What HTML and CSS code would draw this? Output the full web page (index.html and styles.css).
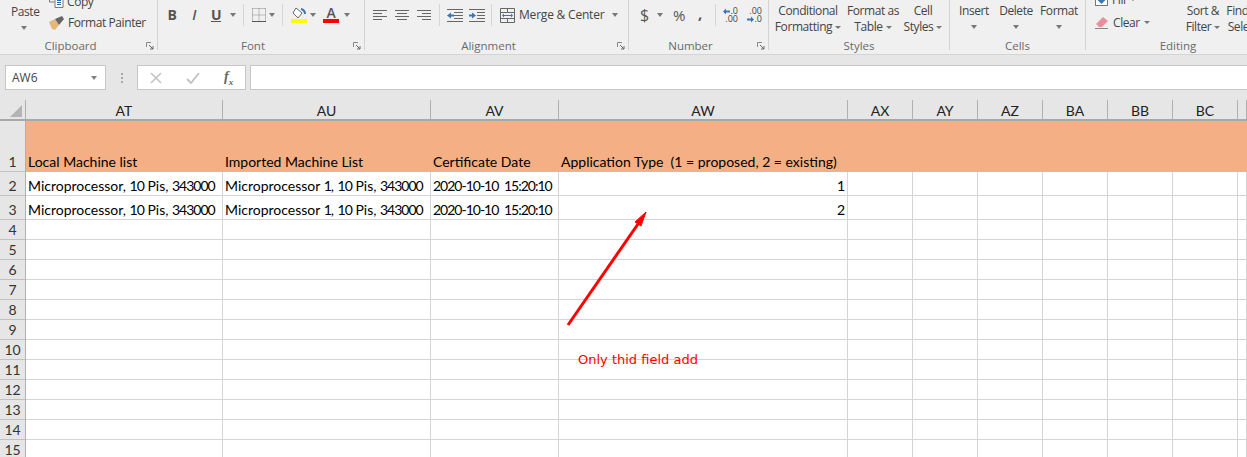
FILE: index.html
```html
<!DOCTYPE html>
<html lang="en">
<head>
<meta charset="utf-8">
<title>Spreadsheet</title>
<link rel="stylesheet" href="styles.css">
</head>
<body>
<div class="app">
  <div class="ribbon">
    <section class="group g-clip">
      <div class="body clip-body">
        <div class="paste"><span>Paste</span><i class="caret"></i></div>
        <div class="clip-list">
          <div class="clip-item copy-item">
            <svg class="copy-icon" width="15" height="15" viewBox="0 0 15 15"><path d="M.5 0v9h5" fill="none" stroke="#777"/><path d="M6 3.500h8v11H6z" fill="#fff" stroke="#777"/><path d="M8 7.500h4M8 9.500h4M8 11.500h4" stroke="#2b6fb5"/></svg>
            <span>Copy</span>
          </div>
          <div class="clip-item">
            <svg class="brush" width="16" height="15" viewBox="0 0 16 15"><path d="M0 6l6-3 4 6-4 5-3-1z" fill="#e6b777"/><path d="M6 3l7-3 2 3-5 6z" fill="#666"/></svg>
            <span>Format Painter</span>
          </div>
        </div>
      </div>
      <div class="foot foot-launch">Clipboard<svg class="launch" width="8" height="8" viewBox="0 0 8 8"><path d="M.5 5V.5H5" fill="none" stroke="#888"/><path d="M3 3l4 4M7 4v3H4" fill="none" stroke="#666"/></svg></div>
    </section>
    <div class="gsep"></div>
    <section class="group g-font">
      <div class="body row-body">
        <span class="fbtn bold">B</span>
        <span class="fbtn ital">I</span>
        <span class="fbtn und">U</span>
        <i class="caret c-font"></i>
        <span class="vsep"></span>
        <svg class="bord" width="14" height="14" viewBox="0 0 14 14"><path d="M.5.5h13M.5 7h13M.5.5v13M7 .5v13M13.500 .5v13" stroke="#888" stroke-dasharray="1 1" fill="none"/><path d="M0 13.500h14" stroke="#555"/></svg>
        <i class="caret c-font"></i>
        <span class="vsep"></span>
        <span class="swatch">
          <svg width="16" height="12" viewBox="0 0 16 12"><path d="M5 1l6 5-4 5-5-5z" fill="#fff" stroke="#666"/><path d="M10 1q5 1 5 6h-2q0-3-3-4z" fill="#3f74b5"/></svg>
          <i class="bar yellow"></i>
        </span>
        <i class="caret c-font"></i>
        <span class="swatch a-swatch">
          <span class="a-letter">A</span>
          <i class="bar red"></i>
        </span>
        <i class="caret c-font"></i>
      </div>
      <div class="foot foot-launch">Font<svg class="launch" width="8" height="8" viewBox="0 0 8 8"><path d="M.5 5V.5H5" fill="none" stroke="#888"/><path d="M3 3l4 4M7 4v3H4" fill="none" stroke="#666"/></svg></div>
    </section>
    <div class="gsep"></div>
    <section class="group g-align">
      <div class="body row-body">
        <svg class="al" width="14" height="11" viewBox="0 0 14 11"><path d="M0 .5h14M0 3.500h9M0 6.500h14M0 9.500h9" stroke="#666"/></svg>
        <svg class="al" width="14" height="11" viewBox="0 0 14 11"><path d="M0 .5h14M2 3.500h10M0 6.500h14M2 9.500h10" stroke="#666"/></svg>
        <svg class="al" width="14" height="11" viewBox="0 0 14 11"><path d="M0 .5h14M5 3.500h9M0 6.500h14M5 9.500h9" stroke="#666"/></svg>
        <span class="vsep v-al1"></span>
        <svg class="ind" width="16" height="13" viewBox="0 0 16 13"><path d="M0 .5h16M7 3.500h9M7 6.500h9M7 9.500h9M0 12.500h16" stroke="#666"/><path d="M0 6.500l4-3v2h3v2H4v2z" fill="#3f74b5"/></svg>
        <svg class="ind" width="16" height="13" viewBox="0 0 16 13"><path d="M0 .5h16M8 3.500h8M8 6.500h8M8 9.500h8M0 12.500h16" stroke="#666"/><path d="M7 6.500l-4-3v2H0v2h3v2z" fill="#3f74b5"/></svg>
        <span class="vsep v-al2"></span>
        <svg class="merge" width="15" height="15" viewBox="0 0 15 15"><path d="M.5.500h14v14H.5zM.5 4.500h14M.5 10.500h14M7.500.5v4M7.500 10.500v4" fill="none" stroke="#666"/><path d="M3 7.500h9" stroke="#3f74b5"/><path d="M2 7.500l2-2v4zM13 7.500l-2-2v4z" fill="#3f74b5"/></svg>
        <span class="merge-text">Merge &amp; Center</span>
        <i class="caret c-merge"></i>
      </div>
      <div class="foot foot-launch">Alignment<svg class="launch" width="8" height="8" viewBox="0 0 8 8"><path d="M.5 5V.5H5" fill="none" stroke="#888"/><path d="M3 3l4 4M7 4v3H4" fill="none" stroke="#666"/></svg></div>
    </section>
    <div class="gsep"></div>
    <section class="group g-num">
      <div class="body row-body">
        <span class="dollar">$</span>
        <i class="caret c-dollar"></i>
        <span class="pct">%</span>
        <span class="comma">,</span>
        <span class="vsep v-num"></span>
        <span class="dec dec-l"><span class="dec-line"><svg width="7" height="7" viewBox="0 0 7 7"><path d="M0 3.500l3-3v2h4v2H3v2z" fill="#3f74b5"/></svg>.0</span><span class="dec-line">.00</span></span>
        <span class="dec dec-r"><span class="dec-line">.00</span><span class="dec-line"><svg width="7" height="7" viewBox="0 0 7 7"><path d="M7 3.500l-3-3v2H0v2h4v2z" fill="#3f74b5"/></svg>.0</span></span>
      </div>
      <div class="foot foot-launch">Number<svg class="launch" width="8" height="8" viewBox="0 0 8 8"><path d="M.5 5V.5H5" fill="none" stroke="#888"/><path d="M3 3l4 4M7 4v3H4" fill="none" stroke="#666"/></svg></div>
    </section>
    <div class="gsep"></div>
    <section class="group g-styles">
      <div class="body two-body">
        <div class="tall st1">Conditional<span>Formatting<i class="caret c-in"></i></span></div>
        <div class="tall st2">Format as<span>Table<i class="caret c-in"></i></span></div>
        <div class="tall st3">Cell<span>Styles<i class="caret c-in"></i></span></div>
      </div>
      <div class="foot">Styles</div>
    </section>
    <div class="gsep"></div>
    <section class="group g-cells">
      <div class="body two-body">
        <div class="tall ce1">Insert<i class="caret c-below"></i></div>
        <div class="tall ce2">Delete<i class="caret c-below"></i></div>
        <div class="tall ce3">Format<i class="caret c-below"></i></div>
      </div>
      <div class="foot">Cells</div>
    </section>
    <div class="gsep"></div>
    <section class="group g-edit">
      <div class="body edit-body">
        <div class="edit-list">
          <div class="edit-item">
            <svg width="13" height="13" viewBox="0 0 13 13"><rect x=".5" y=".5" width="12" height="12" fill="#fff" stroke="#777"/><path d="M6.500 11l-4-4h2.500V2h3v5H10.500z" fill="#3f74b5"/></svg>
            <span>Fill</span><i class="caret c-in"></i>
          </div>
          <div class="edit-item">
            <svg width="14" height="13" viewBox="0 0 14 13"><path d="M1 8l7-7 5 4-6 6H4z" fill="#ec8f9c"/><path d="M0 12.500h13" stroke="#888"/></svg>
            <span>Clear</span><i class="caret c-in"></i>
          </div>
        </div>
        <div class="tall ed1">Sort &amp;<span>Filter<i class="caret c-in"></i></span></div>
        <div class="tall ed2">Find &amp;<span>Select</span></div>
      </div>
      <div class="foot foot-edit">Editing</div>
    </section>
  </div>

  <div class="fbar">
    <div class="namebox"><span>AW6</span><i class="caret c-name"></i></div>
    <div class="dots"><i></i><i></i><i></i></div>
    <div class="fxbox">
      <svg width="12" height="12" viewBox="0 0 12 12"><path d="M1 1l10 10M11 1L1 11" stroke="#c4c4c4" stroke-width="1.600"/></svg>
      <svg width="14" height="12" viewBox="0 0 14 12"><path d="M1 7l4 4 8-10" fill="none" stroke="#c4c4c4" stroke-width="2"/></svg>
      <span class="fx">f<sub>x</sub></span>
    </div>
    <div class="finput"></div>
  </div>

  <div class="sheet">
    <div class="corner"><svg width="12" height="12" viewBox="0 0 12 12"><path d="M12 0v12H0z" fill="#b4b4b4"/></svg></div>
    <div class="ch">AT</div><div class="ch">AU</div><div class="ch">AV</div><div class="ch">AW</div><div class="ch">AX</div><div class="ch">AY</div><div class="ch">AZ</div><div class="ch">BA</div><div class="ch">BB</div><div class="ch">BC</div><div class="ch"></div>

    <div class="rh">1</div><div class="c hd">Local Machine list</div><div class="c hd">Imported Machine List</div><div class="c hd">Certificate Date</div><div class="c hd">Application Type&nbsp; (1 = proposed, 2 = existing)</div><div class="c hd"></div><div class="c hd"></div><div class="c hd"></div><div class="c hd"></div><div class="c hd"></div><div class="c hd"></div><div class="c hd"></div>

    <div class="rh">2</div><div class="c"><span>Microprocessor, <span class="dg">10</span> Pis, <span class="dg">343000</span></span></div><div class="c"><span>Microprocessor <span class="dg">1</span>, <span class="dg">10</span> Pis, <span class="dg">343000</span></span></div><div class="c"><span class="dt">2020-10-10 15:20:10</span></div><div class="c num">1</div><div class="c"></div><div class="c"></div><div class="c"></div><div class="c"></div><div class="c"></div><div class="c"></div><div class="c"></div>

    <div class="rh">3</div><div class="c"><span>Microprocessor, <span class="dg">10</span> Pis, <span class="dg">343000</span></span></div><div class="c"><span>Microprocessor <span class="dg">1</span>, <span class="dg">10</span> Pis, <span class="dg">343000</span></span></div><div class="c"><span class="dt">2020-10-10 15:20:10</span></div><div class="c num">2</div><div class="c"></div><div class="c"></div><div class="c"></div><div class="c"></div><div class="c"></div><div class="c"></div><div class="c"></div>

    <div class="rh">4</div><div class="c"></div><div class="c"></div><div class="c"></div><div class="c"></div><div class="c"></div><div class="c"></div><div class="c"></div><div class="c"></div><div class="c"></div><div class="c"></div><div class="c"></div>
    <div class="rh">5</div><div class="c"></div><div class="c"></div><div class="c"></div><div class="c"></div><div class="c"></div><div class="c"></div><div class="c"></div><div class="c"></div><div class="c"></div><div class="c"></div><div class="c"></div>
    <div class="rh">6</div><div class="c"></div><div class="c"></div><div class="c"></div><div class="c"></div><div class="c"></div><div class="c"></div><div class="c"></div><div class="c"></div><div class="c"></div><div class="c"></div><div class="c"></div>
    <div class="rh">7</div><div class="c"></div><div class="c"></div><div class="c"></div><div class="c"></div><div class="c"></div><div class="c"></div><div class="c"></div><div class="c"></div><div class="c"></div><div class="c"></div><div class="c"></div>
    <div class="rh">8</div><div class="c"></div><div class="c"></div><div class="c"></div><div class="c"></div><div class="c"></div><div class="c"></div><div class="c"></div><div class="c"></div><div class="c"></div><div class="c"></div><div class="c"></div>
    <div class="rh">9</div><div class="c"></div><div class="c"></div><div class="c"></div><div class="c"></div><div class="c"></div><div class="c"></div><div class="c"></div><div class="c"></div><div class="c"></div><div class="c"></div><div class="c"></div>
    <div class="rh">10</div><div class="c"></div><div class="c"></div><div class="c"></div><div class="c"></div><div class="c"></div><div class="c"></div><div class="c"></div><div class="c"></div><div class="c"></div><div class="c"></div><div class="c"></div>
    <div class="rh">11</div><div class="c"></div><div class="c"></div><div class="c"></div><div class="c"></div><div class="c"></div><div class="c"></div><div class="c"></div><div class="c"></div><div class="c"></div><div class="c"></div><div class="c"></div>
    <div class="rh">12</div><div class="c"></div><div class="c"></div><div class="c"></div><div class="c"></div><div class="c"></div><div class="c"></div><div class="c"></div><div class="c"></div><div class="c"></div><div class="c"></div><div class="c"></div>
    <div class="rh">13</div><div class="c"></div><div class="c"></div><div class="c"></div><div class="c"></div><div class="c"></div><div class="c"></div><div class="c"></div><div class="c"></div><div class="c"></div><div class="c"></div><div class="c"></div>
    <div class="rh">14</div><div class="c"></div><div class="c"></div><div class="c"></div><div class="c"></div><div class="c"></div><div class="c"></div><div class="c"></div><div class="c"></div><div class="c"></div><div class="c"></div><div class="c"></div>
    <div class="rh">15</div><div class="c"></div><div class="c"></div><div class="c"></div><div class="c"></div><div class="c"></div><div class="c"></div><div class="c"></div><div class="c"></div><div class="c"></div><div class="c"></div><div class="c"></div>

    <svg class="arrow" width="90" height="125" viewBox="0 0 90 125"><path d="M4 117L74 16" stroke="#f00" stroke-width="3" fill="none"/><path d="M82 4L77 18 71 14z" fill="#f00" stroke="#f00"/></svg>
    <div class="note">Only thid field add</div>
  </div>
</div>
</body>
</html>
```
FILE: styles.css
```css
* { box-sizing: border-box; }
html, body { margin: 0; padding: 0; height: 100%; overflow: hidden; background: #fff; }
body { font-family: "Open Sans", "Noto Sans", sans-serif; color: #444; }
.app { width: 1247px; height: 457px; overflow: hidden; display: flex; flex-direction: column; }

/* ribbon */
.ribbon { display: flex; height: 55px; flex: none; background: #f0f0f0; border-bottom: 1px solid #d4d4d4; overflow: hidden; font-size: 12px; line-height: 16px; letter-spacing: -0.42px; }
.group { display: flex; flex-direction: column; flex: none; height: 54px; }
.gsep { width: 1px; height: 50px; background: #d2d2d2; flex: none; }
.body { height: 38px; flex: none; overflow: hidden; display: flex; }
.foot { position: relative; height: 16px; text-align: center; font-size: 11.500px; line-height: 16px; color: #6a6a6a; letter-spacing: 0; }
.foot-launch { padding-right: 16px; }
.launch { position: absolute; right: 3px; top: 4px; }
.g-clip { width: 157px; }
.g-font { width: 206px; }
.g-align { width: 263px; }
.g-num { width: 139px; }
.g-styles { width: 180px; }
.g-cells { width: 135px; }
.g-edit { width: 161px; }

.caret { display: inline-block; width: 0; height: 0; border-left: 3.500px solid transparent; border-right: 3.500px solid transparent; border-top: 4px solid #777; flex: none; }

.clip-body { padding-left: 11px; }
.paste { width: 38px; display: flex; flex-direction: column; padding-top: 4px; }
.paste .caret { margin: 6px 0 0 10px; }
.clip-list { display: flex; flex-direction: column; margin-top: -8px; }
.clip-item { display: flex; align-items: center; height: 20px; gap: 3px; }
.copy-item { margin-bottom: 1px; }
.copy-icon { margin-top: -4px; }

.row-body { align-items: center; padding-bottom: 8px; }
.g-font .row-body { padding-left: 3px; }
.fbtn { width: 22px; text-align: center; font-size: 13px; color: #555; flex: none; }
.bold { font-weight: 700; font-size: 14px; }
.ital { font-style: italic; font-weight: 600; font-size: 14px; }
.und { font-weight: 700; text-decoration: underline; font-size: 14px; }
.c-font { margin-left: 3px; }
.vsep { width: 1px; height: 22px; background: #d6d6d6; margin: 0 8px 0 7px; flex: none; }
.bord { flex: none; }
.swatch { display: flex; flex-direction: column; width: 16px; align-items: center; flex: none; }
.bar { display: block; width: 16px; height: 4px; }
.yellow { background: #ffff00; }
.red { background: #ff0000; }
.a-swatch { margin: 0 2px 0 7px; }
.a-letter { font-size: 14px; font-weight: 600; line-height: 12px; color: #555; }

.g-align .row-body { padding-left: 8px; }
.al { flex: none; margin-right: 8px; }
.v-al1 { margin: 0 7px 0 0; }
.ind { flex: none; margin-right: 6px; }
.v-al2 { margin: 0 8px 0 0; }
.merge { flex: none; margin-right: 4px; }
.merge-text { white-space: nowrap; width: 85px; flex: none; letter-spacing: -0.2px; }
.c-merge { margin-left: 8px; }

.g-num .row-body { padding-left: 11px; }
.dollar { font-size: 16px; width: 11px; color: #555; flex: none; }
.c-dollar { margin-left: 6px; }
.pct { font-size: 15px; margin-left: 10px; color: #555; width: 14px; flex: none; }
.comma { font-size: 15px; font-weight: 700; margin: -4px 0 0 11px; width: 6px; color: #555; flex: none; }
.v-num { margin: 0 7px 0 11px; }
.dec { display: flex; flex-direction: column; font-size: 9px; line-height: 8px; width: 15px; margin-right: 9px; flex: none; letter-spacing: 0; }
.dec-line { display: flex; justify-content: flex-end; align-items: center; height: 8px; }

.two-body { align-items: flex-start; padding-top: 3px; }
.tall { display: flex; flex-direction: column; align-items: center; white-space: nowrap; text-align: center; flex: none; }
.tall span { display: block; }
.c-in { margin-left: 3px; vertical-align: middle; border-left-width: 3px; border-right-width: 3px; border-top-width: 3px; }
.c-below { margin-top: 6px; }
.st1 { width: 66px; margin-left: 6px; }
.st2 { width: 52px; margin-left: 6px; }
.st3 { width: 42px; margin-left: 3px; }
.ce1 { width: 42px; margin-left: 3px; }
.ce2 { width: 42px; }
.ce3 { width: 42px; margin-left: 1px; }

.edit-body { padding-left: 9px; }
.edit-list { display: flex; flex-direction: column; width: 87px; margin-top: -12px; flex: none; }
.edit-item { display: flex; align-items: center; height: 23px; gap: 4px; }
.edit-item .c-in { margin-left: 0; }
.ed1, .ed2 { padding-top: 3px; }
.ed1 { width: 42px; }
.ed2 { width: 42px; margin-left: -2px; }
.foot-edit { width: 184px; }

/* formula bar */
.fbar { display: flex; height: 45px; flex: none; background: #e6e6e6; padding: 10px 0 10px 5px; }
.namebox { width: 101px; display: flex; align-items: center; justify-content: space-between; background: #fff; border: 1px solid #c6c6c6; padding: 0 8px 0 6px; font-size: 12px; color: #444; }
.c-name { border-top-color: #808080; }
.dots { width: 31px; display: flex; flex-direction: column; align-items: center; justify-content: center; gap: 2px; flex: none; }
.dots i { display: block; width: 2px; height: 2px; background: #a8a8a8; }
.fxbox { width: 109px; flex: none; display: flex; align-items: center; gap: 24px; background: #fff; border: 1px solid #c6c6c6; padding-left: 12px; }
.fx { font-family: "Liberation Serif", serif; font-style: italic; font-weight: 700; font-size: 14px; color: #666; }
.fx sub { font-size: 9px; }
.finput { flex: 1; margin-left: 4px; background: #fff; border: 1px solid #c6c6c6; border-right: 0; }

/* grid */
.sheet { position: relative; flex: 1; display: grid; grid-template-columns: 26px 197px 208px 128px 289px repeat(6, 65px) 9px; grid-template-rows: 21px 51px 24px 24px repeat(12, 20px); font-family: "Lato", "Carlito", sans-serif; font-size: 14px; color: #000; overflow: hidden; }
.corner { background: #e6e6e6; border-right: 1px solid #b0b0b0; border-bottom: 2px solid #a8a8a8; display: flex; align-items: flex-end; justify-content: flex-end; padding: 0 3px 2px 0; }
.ch { background: #e6e6e6; border-right: 1px solid #b0b0b0; border-bottom: 2px solid #a8a8a8; text-align: center; font-size: 14px; line-height: 22px; color: #222; }
.rh { background: #e6e6e6; border-right: 1px solid #b0b0b0; border-bottom: 1px solid #c0c0c0; display: flex; align-items: flex-end; justify-content: center; font-size: 14px; line-height: 19px; color: #333; }
.c { border-right: 1px solid #d4d4d4; border-bottom: 1px solid #d4d4d4; padding: 0 2px; white-space: nowrap; display: flex; align-items: flex-end; line-height: 18px; min-width: 0; }
.hd { background: #f4b084; border-color: #f4b084; }
.num { justify-content: flex-end; }
.dg { letter-spacing: -1px; }
.dt { letter-spacing: -1px; word-spacing: 3px; }
.arrow { position: absolute; left: 564px; top: 108px; }
.note { position: absolute; left: 578px; top: 251px; font-family: "DejaVu Sans", sans-serif; font-size: 13px; line-height: 18px; color: #f00; white-space: nowrap; }
```
